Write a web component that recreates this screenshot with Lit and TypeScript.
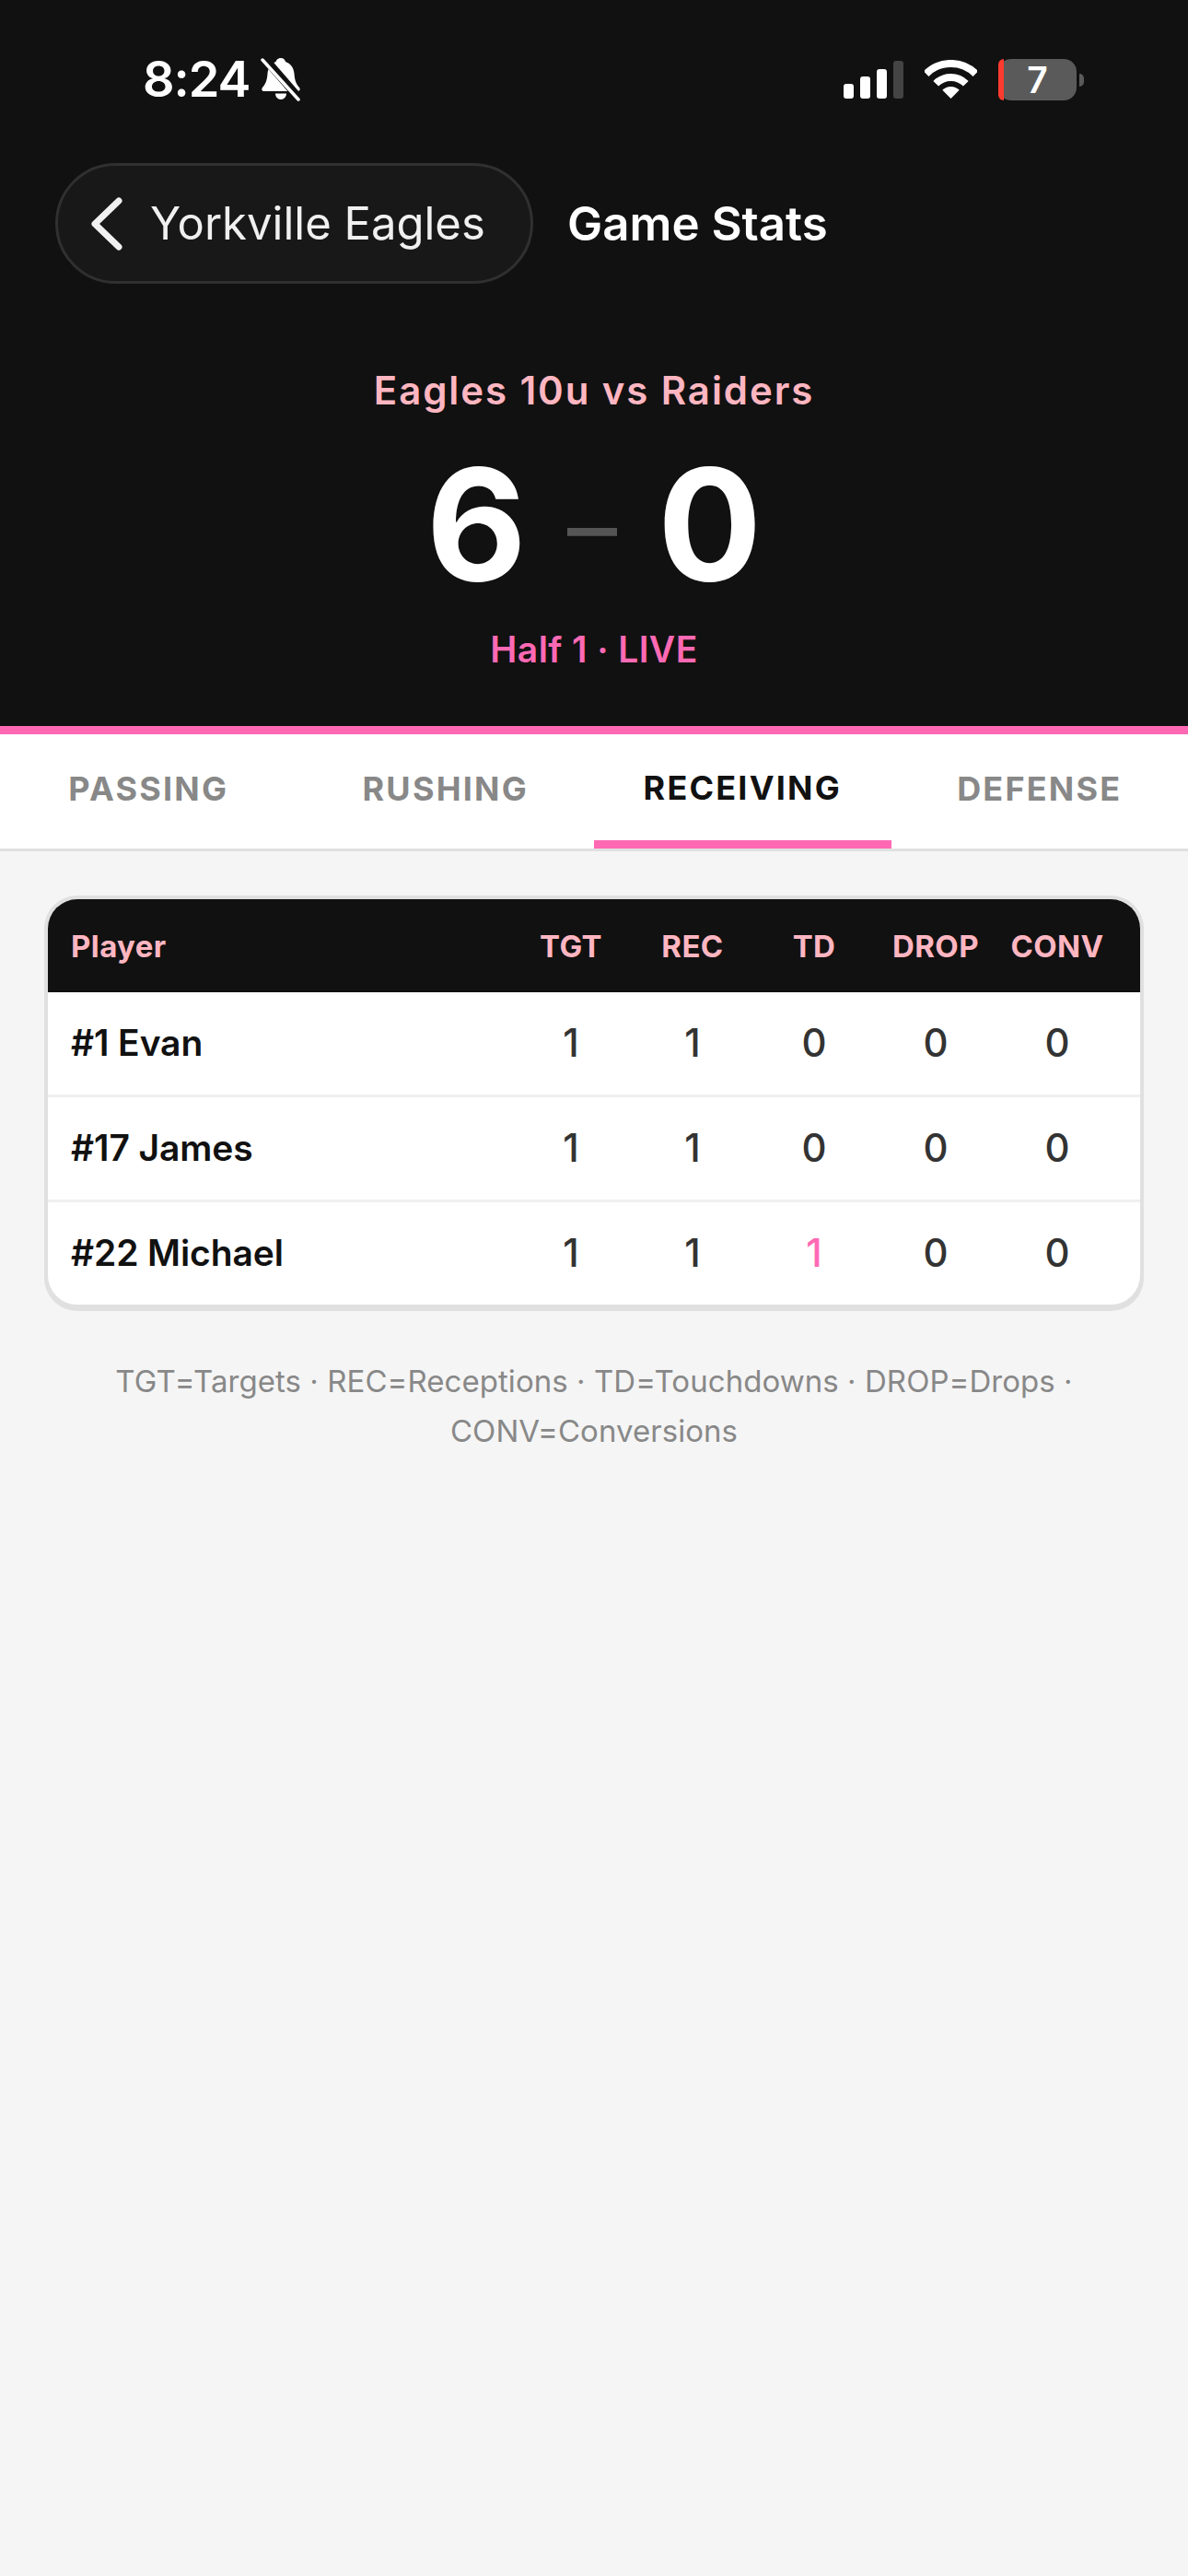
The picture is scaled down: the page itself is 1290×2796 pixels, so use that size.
import { LitElement, html, css, svg } from "lit";
import { customElement } from "lit/decorators.js";

const rows = [
  { name: "#1 Evan", v: [1, 1, 0, 0, 0] },
  { name: "#17 James", v: [1, 1, 0, 0, 0] },
  { name: "#22 Michael", v: [1, 1, 1, 0, 0] },
];
const cols = ["TGT", "REC", "TD", "DROP", "CONV"];
const tabs = ["PASSING", "RUSHING", "RECEIVING", "DEFENSE"];

@customElement("app-root")
export class AppRoot extends LitElement {
  static styles = css`
    :host { display: block; width: 1290px; height: 2796px; background: #f5f5f5; font-family: Inter, "Noto Sans", sans-serif; overflow: hidden; }
    .hero { background: #111; height: 788px; border-bottom: 9px solid #ff69b4; display: flex; flex-direction: column; }
    .status { height: 177px; flex: none; display: flex; justify-content: space-between; align-items: flex-start; padding: 56px 121px 0 155px; box-sizing: border-box; }
    .left { display: flex; align-items: center; gap: 11px; color: #fff; font-size: 54px; font-weight: 600; line-height: 60px; letter-spacing: -1px; }
    .right { display: flex; align-items: flex-start; margin-top: 8px; }
    .bell { margin-top: -1px; }
    .signal { margin-top: 2px; }
    .wifi { margin-left: 23px; margin-top: 1px; }
    .batt { margin-left: 23px; width: 85px; height: 45px; border-radius: 14px; background: #5a5a5a; position: relative; overflow: visible; display: flex; align-items: center; justify-content: center; color: #fff; font-size: 39px; font-weight: 600; line-height: 45px; }
    .batt .red { position: absolute; left: 0; top: 0; bottom: 0; width: 6px; background: #ff3b30; border-radius: 14px 0 0 14px; }
    .batt .cap { position: absolute; left: 88px; top: 16px; width: 5px; height: 14px; background: #5a5a5a; border-radius: 0 6px 6px 0; }
    .nav { display: flex; align-items: center; gap: 37px; padding-left: 60px; height: 131px; flex: none; }
    .back { display: flex; align-items: center; gap: 30px; box-sizing: border-box; height: 131px; width: 519px; padding-left: 36px; border-radius: 66px; background: #181818; border: 3px solid #303030; color: #f0f0f0; font-size: 49px; font-weight: 400; letter-spacing: 0; }
    .navtitle { color: #fff; font-size: 51px; font-weight: 600; }
    .match { text-align: center; color: #ffb6c1; font-size: 42px; font-weight: 600; letter-spacing: 1.9px; line-height: 50px; margin-top: 91px; }
    .score { display: flex; justify-content: center; align-items: center; height: 168px; margin-top: 36px; color: #fff; font-size: 168px; font-weight: 700; line-height: 168px; }
    .score .dash { color: #555; font-size: 108px; font-weight: 400; margin: 0 44px; padding-top: 6px; }
    .period { text-align: center; color: #ff69b4; font-size: 39px; font-weight: 600; letter-spacing: 0.4px; line-height: 48px; margin-top: 28px; }
    .tabs { display: flex; background: #fff; height: 127px; box-sizing: border-box; border-bottom: 3px solid #e0e0e0; }
    .tab { flex: 1; box-sizing: border-box; height: 124px; display: flex; align-items: center; justify-content: center; padding-bottom: 6px; color: #888; font-size: 36px; font-weight: 700; letter-spacing: 2.2px; }
    .tab.on { color: #111; border-bottom: 9px solid #ff69b4; padding-bottom: 0; }
    .card { margin: 48px 48px 0; border: 4px solid #e0e0e0; border-radius: 36px; overflow: hidden; background: #fff; box-shadow: 0 3px 0 #e0e0e0; }
    .row { display: grid; grid-template-columns: 1fr repeat(5, 132px); align-items: center; padding: 0 24px 3px 25px; height: 114px; box-sizing: border-box; border-bottom: 3px solid #f0f0f0; }
    .row:last-child { border-bottom: none; height: 111px; }
    .head { background: #111; height: 101px; border: none; padding-bottom: 0; color: #ffb6c1; font-size: 33px; font-weight: 700; }
    .head span { letter-spacing: 0.4px; }
    .c { text-align: center; }
    .name { color: #111; font-size: 39px; font-weight: 600; letter-spacing: -0.1px; }
    .num { color: #333; font-size: 42px; font-weight: 500; text-align: center; }
    .num.hi { color: #ff69b4; }
    .note { margin: 52px 100px 0; text-align: center; color: #888; font-size: 33px; line-height: 54px; letter-spacing: 0.05px; }
  `;

  bell() {
    return svg`<svg class="bell" width="44" height="48" viewBox="0 0 44 48">
      <path fill="#fff" d="M22 1c3 0 4.500 2 5 4 6 2 9 7 9.500 13 .5 7 2 11 5.500 15 1.500 2 .5 4-2 4H4c-2.500 0-3.500-2-2-4 3.500-4 5-8 5.500-15C8 12 11 7 16.500 5 17 3 19 1 22 1zM16 39.500h12c0 3.500-2.500 6.500-6 6.500s-6-3-6-6.500z"/>
      <path stroke="#111" stroke-width="9" d="M4 1 44 47"/>
      <path stroke="#fff" stroke-width="3.500" stroke-linecap="round" d="M2 3 41 46"/>
    </svg>`;
  }

  signal() {
    return svg`<svg class="signal" width="65" height="41" viewBox="0 0 65 41">
      <rect x="0" y="25" width="11" height="16" rx="3" fill="#fff"/>
      <rect x="18" y="17" width="11" height="24" rx="3" fill="#fff"/>
      <rect x="36" y="9" width="11" height="32" rx="3" fill="#fff"/>
      <rect x="54" y="0" width="11" height="41" rx="3" fill="#444"/>
    </svg>`;
  }

  wifi() {
    return svg`<svg class="wifi" width="57" height="42" viewBox="0 0 57 42">
      <path fill="none" stroke="#fff" stroke-width="8" d="M1.600 15.100A38 38 0 0 1 55.400 15.100"/>
      <path fill="none" stroke="#fff" stroke-width="8" d="M12.200 25.700A23 23 0 0 1 44.800 25.700"/>
      <path fill="#fff" d="M28.500 42 19.300 32.800A13 13 0 0 1 37.700 32.800Z"/>
    </svg>`;
  }

  chevron() {
    return svg`<svg width="34" height="58" viewBox="0 0 34 58"><path d="M30 4 4 29 30 54" fill="none" stroke="#f0f0f0" stroke-width="7" stroke-linecap="round" stroke-linejoin="round"/></svg>`;
  }

  render() {
    return html`
      <div class="hero">
        <div class="status">
          <div class="left"><span>8:24</span>${this.bell()}</div>
          <div class="right">
            ${this.signal()}${this.wifi()}
            <div class="batt"><span class="red"></span>7<span class="cap"></span></div>
          </div>
        </div>
        <div class="nav">
          <div class="back">${this.chevron()}<span>Yorkville Eagles</span></div>
          <div class="navtitle">Game Stats</div>
        </div>
        <div class="match">Eagles 10u vs Raiders</div>
        <div class="score"><span>6</span><span class="dash">–</span><span>0</span></div>
        <div class="period">Half 1 · LIVE</div>
      </div>
      <div class="tabs">
        ${tabs.map((t) => html`<div class="tab ${t === "RECEIVING" ? "on" : ""}">${t}</div>`)}
      </div>
      <div class="card">
        <div class="row head"><span>Player</span>${cols.map((c) => html`<span class="c">${c}</span>`)}</div>
        ${rows.map(
          (r) => html`<div class="row"><span class="name">${r.name}</span>${r.v.map(
            (n, i) => html`<span class="num ${i === 2 && n > 0 ? "hi" : ""}">${n}</span>`
          )}</div>`
        )}
      </div>
      <div class="note">TGT=Targets · REC=Receptions · TD=Touchdowns · DROP=Drops · CONV=Conversions</div>
    `;
  }
}
